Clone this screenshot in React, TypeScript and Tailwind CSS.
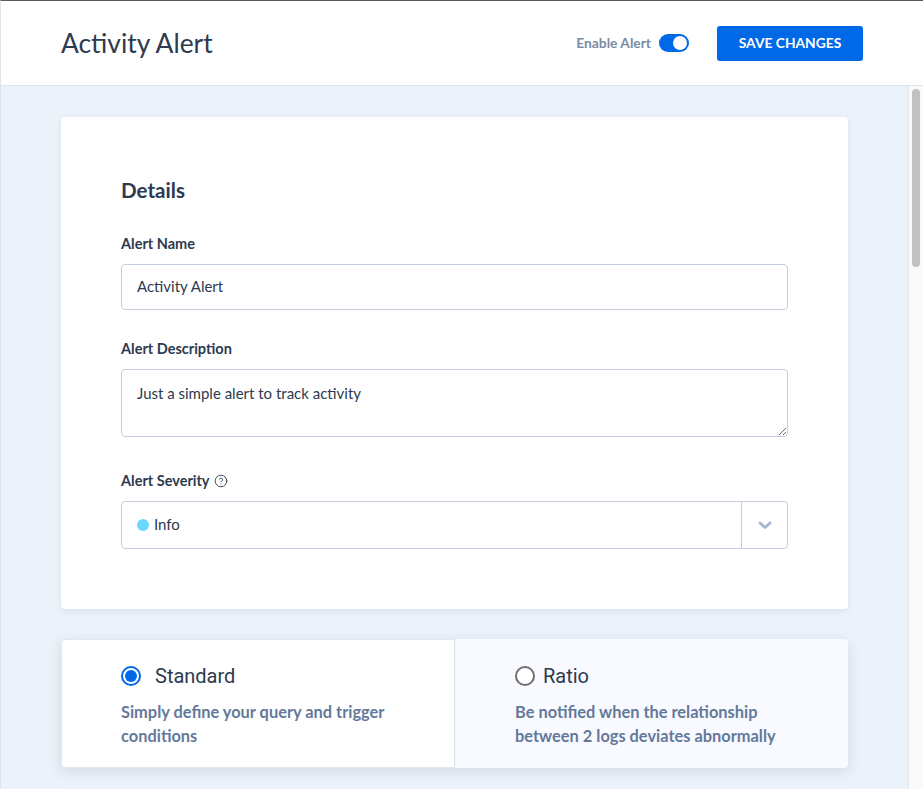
import { CircleHelp } from 'lucide-react';

const labelClass = 'block text-[14.5px] leading-[18px] font-bold text-[#2d3a4f]';
const inputClass = 'w-full rounded border border-[#c3cfdc] bg-white px-[15px] text-[15px] text-[#2d3a4f] outline-none';

export default function App() {
  return (
    <div className="flex h-[789px] w-[923px] flex-col overflow-hidden border-t border-l border-t-[#5a5a5a] border-l-[#dfe5ee] bg-[#ecf2fa] font-['Lato',sans-serif]">
      {/* Header */}
      <header className="flex h-[85px] shrink-0 items-center justify-between border-b border-[#dfe5ee] bg-white pr-[60px] pl-[60px]">
        <h1 className="text-[26.4px] leading-none font-normal text-[#2d3a4f]">Activity Alert</h1>
        <div className="flex items-center">
          <span className="pt-[1px] text-[13.8px] font-bold text-[#7a8ba5]">Enable Alert</span>
          <span className="ml-2 flex h-[18px] w-[30px] items-center justify-end rounded-full bg-[#0069e8] pr-[2px]">
            <span className="h-[14px] w-[14px] rounded-full bg-white" />
          </span>
          <button className="ml-[28px] h-[35px] w-[146px] rounded-[3px] bg-[#0069e8] text-[13.8px] font-bold text-white">
            SAVE CHANGES
          </button>
        </div>
      </header>

      <div className="flex min-h-0 flex-1">
        <main className="min-w-0 flex-1 pt-[31px] pl-[60px]">
          {/* Details card */}
          <section className="h-[492px] w-[787px] rounded bg-white px-[60px] pt-[61px] shadow-[0_2px_6px_rgba(90,110,140,0.12)]">
            <h2 className="text-[20.6px] leading-[24px] font-bold text-[#2d3a4f]">Details</h2>

            <label className={`${labelClass} mt-[33px]`}>Alert Name</label>
            <input readOnly value="Activity Alert" className={`${inputClass} mt-[11px] h-[46px] pb-[2px]`} />

            <label className={`${labelClass} mt-[30px]`}>Alert Description</label>
            <textarea
              readOnly
              value="Just a simple alert to track activity"
              className={`${inputClass} mt-[11px] block h-[68px] py-[14px] leading-[18px]`}
            />

            <div className="mt-[35px] flex items-center gap-[4px]">
              <span className={labelClass}>Alert Severity</span>
              <CircleHelp size={14} strokeWidth={1.5} className="text-[#2d3a4f]" />
            </div>
            <div className="mt-[11px] flex h-[48px] items-stretch rounded border border-[#c3cfdc]">
              <div className="flex flex-1 items-center pb-[1px] pl-[15px] text-[15px] text-[#2d3a4f]">
                <span className="h-3 w-3 rounded-full bg-[#6cd8ff]" />
                <span className="ml-[5px]">Info</span>
              </div>
              <div className="flex w-[46px] items-center justify-center border-l border-[#c3cfdc]">
                <svg width="14" height="9" viewBox="0 0 14 9" fill="none" className="text-[#a9b8cf]">
                  <path d="M2 2l5 4.5L12 2" stroke="currentColor" strokeWidth="3" strokeLinecap="round" strokeLinejoin="round" />
                </svg>
              </div>
            </div>
          </section>

          {/* Alert type */}
          <section className="mt-[30px] flex h-[129px] w-[787px] rounded bg-[#f8faff] shadow-[0_4px_14px_rgba(90,110,140,0.18)]">
            <div className="w-[394px] rounded-l border border-[#e2e7ee] border-r-[#d3dbe6] bg-white pt-[24px] pl-[59px]">
              <div className="flex items-center">
                <span className="flex h-5 w-5 items-center justify-center rounded-full border-2 border-[#0069e8]">
                  <span className="h-3 w-3 rounded-full bg-[#0069e8]" />
                </span>
                <span className="ml-[14px] font-['Roboto',sans-serif] text-[20px] leading-[24px] text-[#2d3a4f]">Standard</span>
              </div>
              <p className="mt-[12px] w-[300px] text-[16.4px] leading-[24px] font-bold text-[#64799a]">
                Simply define your query and trigger conditions
              </p>
            </div>
            <div className="flex-1 pt-[25px] pl-[60px]">
              <div className="flex items-center">
                <span className="h-5 w-5 rounded-full border-2 border-[#6f6f6f] bg-white" />
                <span className="ml-2 font-['Roboto',sans-serif] text-[20px] leading-[24px] text-[#2d3a4f]">Ratio</span>
              </div>
              <p className="mt-[12px] w-[300px] text-[16.4px] leading-[24px] font-bold text-[#64799a]">
                Be notified when the relationship between 2 logs deviates abnormally
              </p>
            </div>
          </section>
        </main>

        {/* Scrollbar */}
        <div className="w-[15px] shrink-0 border-l border-[#e6e6e6] bg-[#fafafa] pt-[3px] pl-[3px]">
          <div className="h-[178px] w-[8px] rounded-full bg-[#c1c1c1]" />
        </div>
      </div>
    </div>
  );
}
